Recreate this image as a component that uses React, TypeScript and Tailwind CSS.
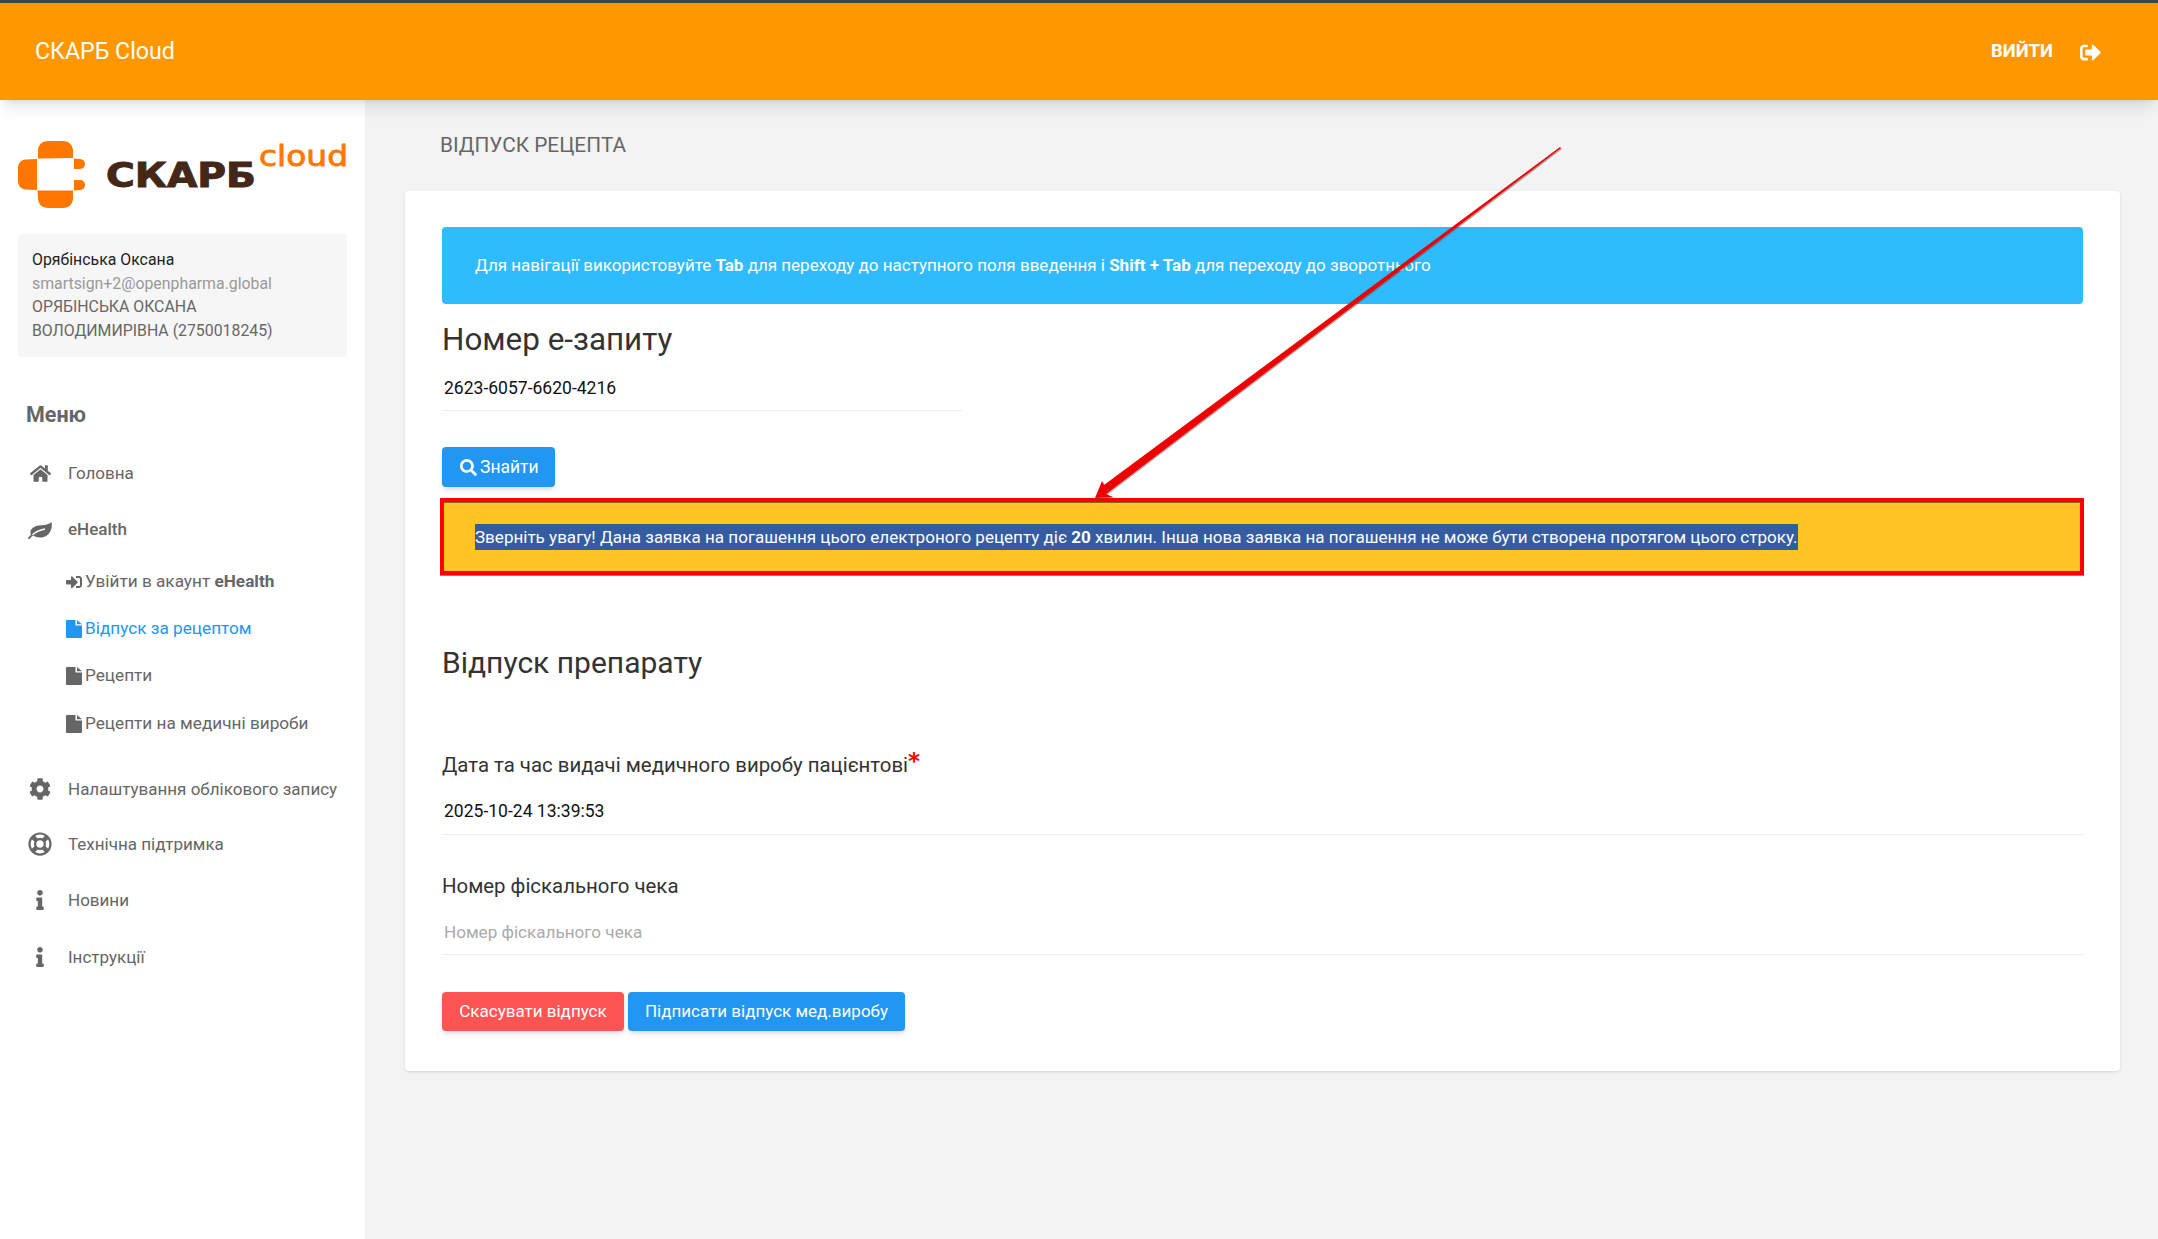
import { FaCog, FaInfo, FaHome, FaRegLifeRing, FaSearch, FaSignInAlt, FaSignOutAlt } from "react-icons/fa";
import type { ReactNode } from "react";

function Logo() {
	return (
		<svg viewBox="0 0 329 67" className="block w-[329px] h-[67px] overflow-visible">
			<path
				fill="#ff7700"
				d="M20 17.5V10C20 4 24 0 30 0H45C51 0 55 4 55 10V17L19.500 17.500ZM19 18V49L8 48.500C3 48 0 45 0 40V27C0 22 3 19 8 18.500ZM19.500 49.500H55V57C55 63 51 67 45 67H30C24 67 20 63 20 57ZM56 17.500L62 18C65 18.500 67 20 67 23S65 27.500 62 28H56V17.500ZM62 39C65 39 67 41 67 44S65 48.500 62 49L56 49.500V39Z"
			/>
			<text
				x="88"
				y="46"
				textLength="150"
				lengthAdjust="spacingAndGlyphs"
				fill="#432818"
				stroke="#432818"
				strokeWidth="1"
				className="font-['DejaVu_Sans'] font-bold text-[34px]"
			>
				СКАРБ
			</text>
			<text
				x="241"
				y="25"
				textLength="89"
				lengthAdjust="spacingAndGlyphs"
				fill="#ff7700"
				stroke="#ff7700"
				strokeWidth="0.8"
				className="font-['DejaVu_Sans'] text-[28px]"
			>
				cloud
			</text>
		</svg>
	);
}

function LeafIcon() {
	return (
		<svg viewBox="0 0 24 17" className="w-[24px] h-[17px]">
			<path fill="#666" d="M3 13C1 8 5 4 11 3.500C16 3 20 3 23.500 0C24.500 5 23 11 18 14C13 16.500 8 15.500 5.500 13.500Z" />
			<path fill="none" stroke="#666" strokeWidth="1.800" strokeLinecap="round" d="M1 16.200C2 15 3 14 4.500 12.800" />
			<path fill="none" stroke="#fff" strokeWidth="1.300" d="M4.500 12.800C8 9.500 12 8 17 7" />
		</svg>
	);
}

function FileIcon({ active }: { active?: boolean }) {
	return (
		<svg viewBox="0 0 16 18" className={`w-[16px] h-[18px] ${active ? "fill-[#2196f3]" : "fill-[#666]"}`}>
			<path d="M1 0H9.500V5.500H16V17C16 17.600 15.600 18 15 18H1C.4 18 0 17.600 0 17V1C0 .4.400 0 1 0Z" />
			<path d="M11 0L16 4.200H11Z" />
		</svg>
	);
}

function MenuItem({ icon, bold, children, className }: { icon: ReactNode; bold?: boolean; children: ReactNode; className: string }) {
	return (
		<div className={`flex items-center h-[24px] pl-[28px] ${className}`}>
			<span className="w-[24px] flex justify-center text-[#666]">{icon}</span>
			<span className={`ml-[16px] text-[17px] text-[#666] ${bold ? "font-medium" : ""}`}>{children}</span>
		</div>
	);
}

function SubItem({ icon, active, children, className }: { icon: ReactNode; active?: boolean; children: ReactNode; className: string }) {
	return (
		<div className={`flex items-center h-[24px] pl-[66px] text-[17.200px] ${active ? "text-[#2196f3]" : "text-[#666]"} ${className}`}>
			<span className="w-[19px] text-[16px]">{icon}</span>
			<span>{children}</span>
		</div>
	);
}

function Sidebar() {
	return (
		<aside className="w-[365px] shrink-0 bg-white pt-[41px]">
			<div className="pl-[18px]">
				<Logo />
			</div>
			<div className="ml-[18px] mt-[26px] w-[329px] h-[123px] rounded bg-[#f6f6f6] px-[14px] pt-[14px] text-[15.850px] leading-[23.500px] text-[#666]">
				<div className="text-[#222]">Орябінська Оксана</div>
				<div className="text-[#999]">smartsign+2@openpharma.global</div>
				<div>ОРЯБІНСЬКА ОКСАНА</div>
				<div>ВОЛОДИМИРІВНА (2750018245)</div>
			</div>
			<div className="ml-[26px] mt-[45px] text-[21.500px] leading-[26px] font-bold text-[#666]">Меню</div>
			<MenuItem className="mt-[34px]" icon={<FaHome className="text-[21px] -mt-[2px]" />}>Головна</MenuItem>
			<MenuItem className="mt-[32px]" icon={<LeafIcon />} bold>eHealth</MenuItem>
			<SubItem className="mt-[28px]" icon={<FaSignInAlt />}>
				Увійти в акаунт <span className="font-bold">eHealth</span>
			</SubItem>
			<SubItem className="mt-[23px]" icon={<FileIcon active />} active>Відпуск за рецептом</SubItem>
			<SubItem className="mt-[23px]" icon={<FileIcon />}>Рецепти</SubItem>
			<SubItem className="mt-[24px]" icon={<FileIcon />}>Рецепти на медичні вироби</SubItem>
			<MenuItem className="mt-[42px]" icon={<FaCog className="text-[22px] -mt-[2px]" />}>Налаштування облікового запису</MenuItem>
			<MenuItem className="mt-[31px]" icon={<FaRegLifeRing className="text-[24px] -mt-[2px]" />}>Технічна підтримка</MenuItem>
			<MenuItem className="mt-[32px]" icon={<FaInfo className="text-[20px] -mt-[3px]" />}>Новини</MenuItem>
			<MenuItem className="mt-[33px]" icon={<FaInfo className="text-[20px] -mt-[3px]" />}>Інструкції</MenuItem>
		</aside>
	);
}

function Field({ label, required, value, placeholder, className, valueClass }: { label: string; required?: boolean; value?: string; placeholder?: string; className: string; valueClass: string }) {
	return (
		<div className={className}>
			<div className="h-[28px] text-[20.400px] leading-[28px] text-[#333]">
				{label}
				{required && <span className="text-[#ff0000] font-['DejaVu_Sans'] font-bold text-[23px] leading-[20px] align-top">*</span>}
			</div>
			<div className={`mt-[20px] pl-[2px] border-b border-[#eeeeee] leading-[24px] ${valueClass} ${value ? "text-[17.550px] text-[#111]" : "text-[17.100px] text-[#aaa]"}`}>
				{value ?? placeholder}
			</div>
		</div>
	);
}

function ShotArrow() {
	return (
		<svg viewBox="0 0 2158 1239" className="absolute inset-0 w-[2158px] h-[1239px] pointer-events-none">
			<polygon fill="#555555" opacity="0.5" transform="translate(1 1)" points="1560,147 1561,148 1106,494 1113,497 1095,498 1102,481 1104,485" />
			<polygon fill="#f00000" points="1560,147 1561,148 1106,494 1113,497 1095,498 1102,481 1104,485" />
		</svg>
	);
}

export default function App() {
	return (
		<div className="relative w-[2158px] h-[1239px] overflow-hidden bg-[#f3f3f3] font-['Roboto',sans-serif]">
			<header className="relative z-10 flex items-center justify-between h-[100px] border-t-[3px] border-[#444] bg-[#ff9800] pl-[35px] pr-[57px] text-white shadow-lg">
				<span className="text-[23.200px]">СКАРБ Cloud</span>
				<span className="flex items-center font-bold text-[18.500px] pt-[1px]">
					ВИЙТИ
					<FaSignOutAlt className="ml-[27px] text-[21px]" />
				</span>
			</header>
			<div className="flex h-[1139px]">
				<Sidebar />
				<main className="flex-1 pl-[40px] pr-[38px]">
					<div className="pt-[33px] pl-[35px] text-[20.800px] leading-[24px] text-[#666]">ВІДПУСК РЕЦЕПТА</div>
					<section className="mt-[34px] h-[880px] rounded-sm bg-white px-[37px] pt-[36px] shadow-sm">
						<div className="flex items-center h-[77px] rounded-sm bg-[#2fbbfe] pl-[33px] pt-[1px] text-[17px] text-white">
							<span>
								Для навігації використовуйте <b className="font-bold">Tab</b> для переходу до наступного поля введення і <b className="font-bold">Shift + Tab</b> для переходу до зворотнього
							</span>
						</div>
						<h2 className="mt-[16px] text-[31.400px] leading-[40px] text-[#333]">Номер е-запиту</h2>
						<div className="mt-[16px] w-[520px] h-[35px] pl-[2px] border-b border-[#eeeeee] text-[17.550px] leading-[24px] text-[#111]">2623-6057-6620-4216</div>
						<button className="flex items-center mt-[36px] h-[40px] w-[113px] rounded-sm bg-[#2196f3] pl-[18px] text-[17.500px] text-white shadow-md">
							<FaSearch className="mr-[3px] text-[17px]" />
							Знайти
						</button>
						<div className="-ml-[2px] -mr-[1px] mt-[11px] h-[77px] border-[4px] border-[#ff0000] bg-[#fec524] pl-[31px] pt-[22px] shadow-[inset_0_1px_0_#8a6a10,0_1px_0_#888888]">
							<span className="inline-block h-[26px] bg-[#355ba1] text-[17.050px] leading-[26px] text-white">
								Зверніть увагу! Дана заявка на погашення цього електроного рецепту діє <b className="font-bold">20</b> хвилин. Інша нова заявка на погашення не може бути створена протягом цього строку.
							</span>
						</div>
						<h2 className="mt-[68px] text-[30px] leading-[40px] text-[#333]">Відпуск препарату</h2>
						<Field className="mt-[68px]" valueClass="h-[36px]" label="Дата та час видачі медичного виробу пацієнтові" required value="2025-10-24 13:39:53" />
						<Field className="mt-[37px]" valueClass="h-[35px]" label="Номер фіскального чека" placeholder="Номер фіскального чека" />
						<div className="flex gap-[4px] mt-[37px]">
							<button className="h-[39px] w-[182px] rounded-sm bg-[#ff5454] text-[17px] text-white shadow-md">Скасувати відпуск</button>
							<button className="h-[39px] w-[277px] rounded-sm bg-[#2196f3] text-[17px] text-white shadow-md">Підписати відпуск мед.виробу</button>
						</div>
					</section>
				</main>
			</div>
			<ShotArrow />
		</div>
	);
}
